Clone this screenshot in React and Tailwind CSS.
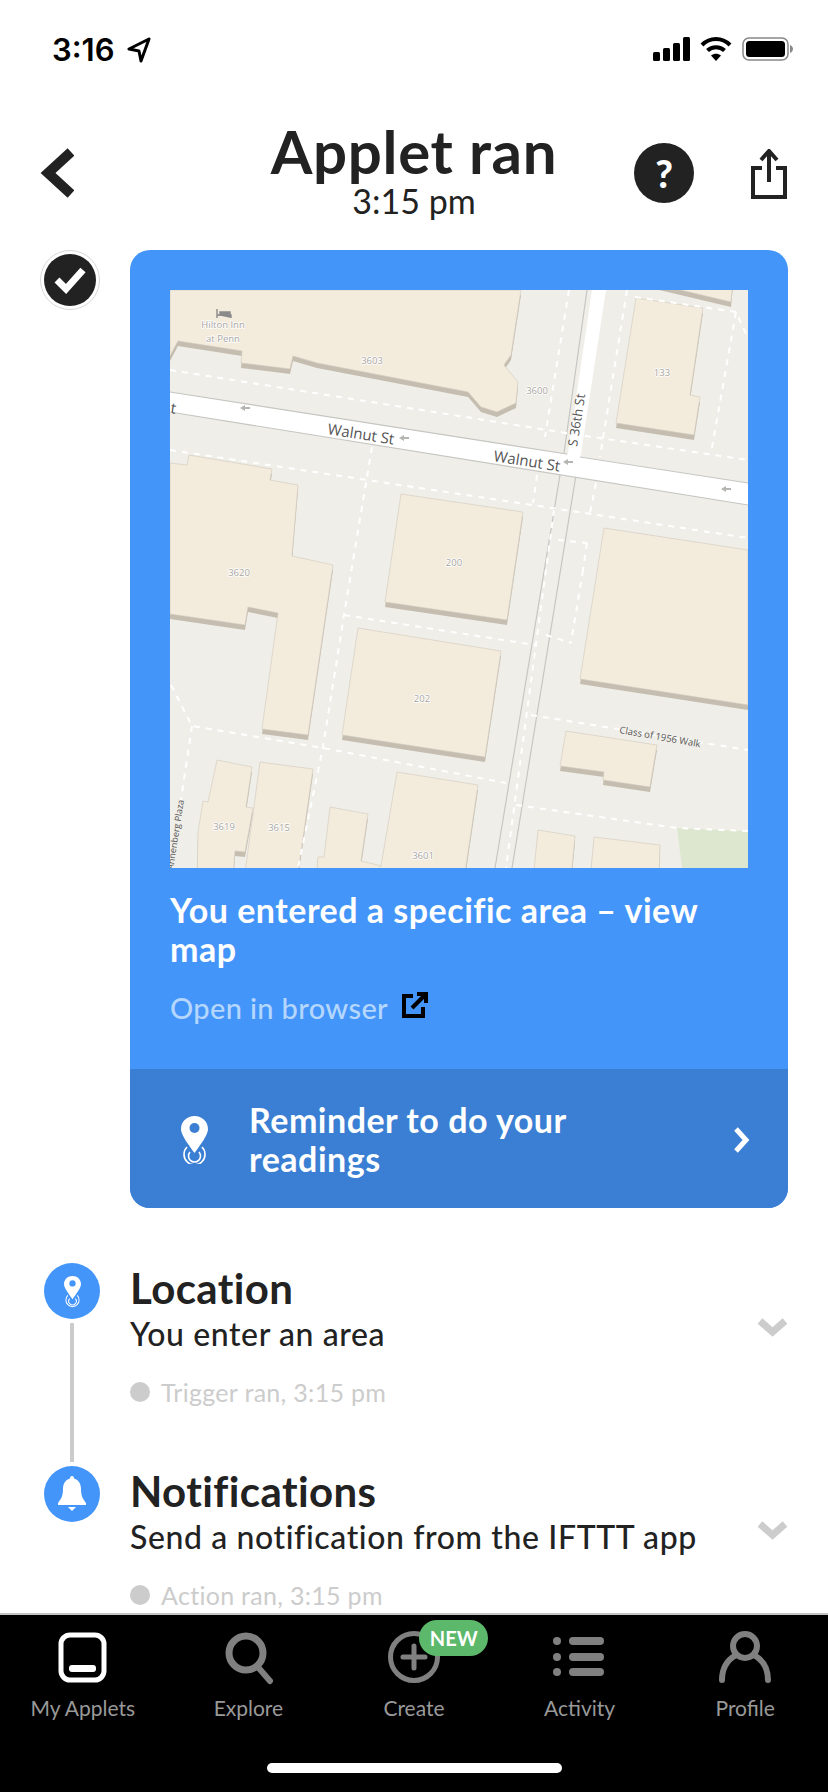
import React from "react";

const buildings = [
  "0,0 351,0 341,65 334,75 348,92 346,113 327,122 311,117 298,102 147,73 123,66 120,79 71,73 72,61 8,51 0,66",
  "466,8 533,18 520,105 530,107 524,145 446,133",
  "468,-10 563,-10 561,12",
  "0,173 17,175 19,165 102,179 100,190 128,195 122,266 163,275 138,445 92,439 108,323 78,317 75,335 0,324",
  "231,204 353,222 337,330 215,312",
  "434,238 578,260 578,415 410,389",
  "188,338 331,361 315,467 172,445",
  "396,441 487,455 480,497 433,490 434,482 390,476",
  "47,470 82,477 76,517 83,518 75,562 65,561 63,590 27,590 28,542 33,511 38,512",
  "90,472 143,479 127,590 74,590",
  "160,517 198,524 191,571 212,576 212,590 146,590 148,567 154,567",
  "227,482 308,495 294,590 200,590 211,576",
  "368,540 405,546 401,590 363,590",
  "424,547 490,555 489,590 420,590",
];

const dashes = [
  "0,80 396,143 578,170",
  "399,0 375,147",
  "457,0 430,167",
  "465,7 566,22 578,48",
  "566,22 541,163",
  "0,160 197,190 382,218 578,248",
  "202,157 174,325 153,457 128,578",
  "367,185 363,213",
  "426,193 420,223",
  "384,220 336,578",
  "413,280 401,353",
  "417,253 413,280",
  "388,250 417,253",
  "174,325 365,355",
  "376,345 401,353",
  "1,395 22,436 153,458 336,493",
  "22,436 8,530",
  "361,425 578,460",
  "346,515 507,538 578,541",
];

const labels = [
  ["Hilton Inn", 53, 38],
  ["at Penn", 53, 52],
  ["3603", 202, 74],
  ["3600", 367, 104],
  ["133", 492, 86],
  ["200", 284, 276],
  ["3620", 69, 286],
  ["202", 252, 412],
  ["3619", 54, 540],
  ["3615", 109, 541],
  ["3601", 253, 569],
];

const MapView = () => (
  <svg viewBox="0 0 578 578" className="w-[578px] h-[578px] block">
    <rect width="578" height="578" fill="#f0eee8" />
    <polygon points="507,538 578,541 578,578 512,578" fill="#dde7cf" />
    {/* Schatten */}
    {buildings.map((b) => (
      <polygon key={b} points={b} fill="#c4bdb0" transform="translate(0 5)" />
    ))}
    {buildings.map((b) => (
      <polygon key={b} points={b} fill="#f3ebdc" stroke="#d0cabd" strokeWidth="0.6" />
    ))}
    <path d="M417,0 L394,163 M390,185 L325,578 M406,185 L342,578" stroke="#c6c6c2" strokeWidth="1.2" fill="none" />
    <polygon points="422,0 436,0 410,170 397,170" fill="#fff" />
    <polygon points="0,102 578,193 578,215 0,122" fill="#fff" />
    <path d="M0,102 L397,164 M410,167 L578,193 M0,122 L578,215" stroke="#c6c6c2" strokeWidth="1.2" fill="none" />
    {dashes.map((d) => (
      <polyline key={d} points={d} fill="none" stroke="#fff" strokeWidth="2" strokeDasharray="6 6" />
    ))}
    <g fontFamily="'Open Sans', sans-serif" fill="#555">
      <text transform="translate(157 144) rotate(9)" fontSize="15">Walnut St</text>
      <text transform="translate(323 171) rotate(9)" fontSize="15">Walnut St</text>
      <text transform="translate(0 123) rotate(9)" fontSize="15">t</text>
      <text transform="translate(407 157) rotate(-81)" fontSize="13">S 36th St</text>
      <text transform="translate(449 443) rotate(10)" fontSize="9.5">Class of 1956 Walk</text>
      <text transform="translate(3 580) rotate(-81)" fontSize="9">Annenberg Plaza</text>
    </g>
    <g
      fontFamily="'Open Sans', sans-serif"
      fill="#a8a5a0"
      stroke="#ffffff"
      strokeWidth="1.5"
      textAnchor="middle"
      style={{ paintOrder: "stroke" }}
    >
      {labels.map(([t, x, y]) => (
        <text key={t} x={x} y={y} fontSize="9.5">{t}</text>
      ))}
    </g>
    <path d="M47,19 V28 M47,25 H61 V28 M50,22 H60 V25 H50 Z" stroke="#8a8a8a" strokeWidth="1.4" fill="#8a8a8a" />
    <g fill="#b5b5b2">
      <path d="M70,122 l5,-3 v2 h5 v2 h-5 v2 Z" transform="translate(0 -4)" />
      <path d="M229,152 l5,-3 v2 h5 v2 h-5 v2 Z" transform="translate(0 -4)" />
      <path d="M393,176 l5,-3 v2 h5 v2 h-5 v2 Z" transform="translate(0 -4)" />
      <path d="M551,203 l5,-3 v2 h5 v2 h-5 v2 Z" transform="translate(0 -4)" />
    </g>
  </svg>
);

const Pin = ({ className, fill = "#fff", hole = "#3a7fd3" }) => (
  <svg viewBox="0 0 27 48" className={className}>
    <path d="M13.5,0 C6,0 0,5.5 0,13 C0,19 7,28 13.5,37 C20,28 27,19 27,13 C27,5.5 21,0 13.5,0 Z" fill={fill} />
    <circle cx="13.5" cy="12" r="5" fill={hole} />
    <path d="M6,31 A10.5,10.5 0 1 0 21,31" fill="none" stroke={fill} strokeWidth="1.6" />
    <path d="M9,36 A6,6 0 1 0 18,36" fill="none" stroke={fill} strokeWidth="1.6" />
  </svg>
);

const Chevron = ({ className }) => (
  <svg viewBox="0 0 31 20" className={className}>
    <path d="M3,3 L15.5,14 L28,3" fill="none" stroke="#cccccc" strokeWidth="7" strokeLinejoin="miter" />
  </svg>
);

const TimelineItem = ({ icon, title, text, status, last }) => (
  <div className="flex">
    <div className="w-[56px] ml-[44px] flex flex-col items-center shrink-0">
      <div className="w-[56px] h-[56px] rounded-full bg-[#4495f9] flex items-center justify-center">
        {icon}
      </div>
      {!last && <div className="w-[4px] h-[139px] bg-[#cccccc] mt-[4px] mb-[4px]" />}
    </div>
    <div className="ml-[30px] w-[658px] relative">
      <div className="text-[42px] leading-[48px] font-bold tracking-[0.4px] text-[#222] mt-[1px]">{title}</div>
      <div className="text-[32px] leading-[36px] font-medium tracking-[0.6px] text-[#222] mt-[4px]">{text}</div>
      <div className="flex items-center mt-[25px] text-[#cccccc] text-[25px] tracking-[0.3px] leading-[30px]">
        <span className="w-[20px] h-[20px] rounded-full bg-[#cccccc] mr-[11px]" />
        {status}
      </div>
      <Chevron className="absolute right-0 top-[55px] w-[31px] h-[20px]" />
    </div>
  </div>
);

const tabs = [
  {
    name: "My Applets",
    icon: (
      <svg viewBox="0 0 60 60" className="w-[60px] h-[60px]">
        <rect x="8" y="6" width="43" height="45" rx="9" fill="none" stroke="#fff" strokeWidth="5" />
        <rect x="16" y="36" width="27" height="7" rx="3" fill="#fff" />
      </svg>
    ),
  },
  {
    name: "Explore",
    icon: (
      <svg viewBox="0 0 60 60" className="w-[60px] h-[60px]">
        <circle cx="28" cy="24" r="17" fill="none" stroke="#808080" strokeWidth="7" />
        <path d="M39,37 L52,52" stroke="#808080" strokeWidth="6" strokeLinecap="round" />
      </svg>
    ),
  },
  {
    name: "Create",
    icon: (
      <svg viewBox="0 0 60 60" className="w-[60px] h-[60px]">
        <circle cx="30" cy="28" r="23.5" fill="none" stroke="#808080" strokeWidth="5" />
        <path d="M30,17 V39 M19,28 H41" stroke="#808080" strokeWidth="5" strokeLinecap="round" />
      </svg>
    ),
    badge: true,
  },
  {
    name: "Activity",
    icon: (
      <svg viewBox="0 0 60 60" className="w-[60px] h-[60px]" fill="#808080">
        <circle cx="7" cy="12" r="4" />
        <circle cx="7" cy="28" r="4" />
        <circle cx="7" cy="43" r="4" />
        <rect x="19" y="8" width="35" height="8" rx="4" />
        <rect x="19" y="24" width="35" height="8" rx="4" />
        <rect x="19" y="39" width="35" height="8" rx="4" />
      </svg>
    ),
  },
  {
    name: "Profile",
    icon: (
      <svg viewBox="0 0 60 60" className="w-[60px] h-[60px]" fill="none" stroke="#808080" strokeWidth="6">
        <circle cx="30" cy="17" r="12" />
        <path d="M7,51 C7,38 14,30 21,26 M53,51 C53,38 46,30 39,26" strokeLinecap="round" />
      </svg>
    ),
  },
];

const App = () => {
  return (
    <div
      className="w-[828px] h-[1792px] bg-white flex flex-col overflow-hidden"
      style={{ fontFamily: "Lato, 'Noto Sans', sans-serif" }}
    >
      {/* Status bar */}
      <div className="h-[100px] shrink-0 flex justify-between items-start pt-[32px] pl-[52px] pr-[35px]">
        <div className="flex items-center">
          <span className="text-[31px] leading-[36px] font-semibold text-black" style={{ fontFamily: "Inter, sans-serif" }}>3:16</span>
          <svg viewBox="0 0 24 26" className="w-[24px] h-[26px] ml-[12px]">
            <path d="M22,2 L2,12 L12,14 L14,24 Z" fill="none" stroke="#000" strokeWidth="3" strokeLinejoin="round" />
          </svg>
        </div>
        <div className="flex items-center gap-[10px] pt-[5px]">
          <svg viewBox="0 0 37 24" className="w-[37px] h-[24px]" fill="#000">
            <rect x="0" y="15" width="7" height="9" rx="1.5" />
            <rect x="10" y="11" width="7" height="13" rx="1.5" />
            <rect x="20" y="6" width="7" height="18" rx="1.5" />
            <rect x="30" y="0" width="7" height="24" rx="1.5" />
          </svg>
          <svg viewBox="0 0 32 24" className="w-[32px] h-[24px]" fill="none" stroke="#000" strokeWidth="4">
            <path d="M2,8 C10,0 22,0 30,8" />
            <path d="M7.5,13.5 C12,9 20,9 24.5,13.5" />
            <path d="M16,24 L11,18.5 C14,16 18,16 21,18.5 Z" fill="#000" stroke="none" />
          </svg>
          <svg viewBox="0 0 51 24" className="w-[51px] h-[24px]">
            <rect x="1" y="1" width="45" height="22" rx="6" fill="none" stroke="#888" strokeWidth="1.5" />
            <rect x="4" y="4" width="39" height="16" rx="3.5" fill="#000" />
            <path d="M48,8 C50,9 51,10.5 51,12 C51,13.5 50,15 48,16 Z" fill="#888" />
          </svg>
        </div>
      </div>

      {/* Header */}
      <div className="h-[150px] shrink-0 relative flex flex-col items-center">
        <div className="text-[60px] leading-[56px] font-bold tracking-[0.7px] text-[#222] mt-[23px]">Applet ran</div>
        <div className="text-[34px] leading-[34px] text-[#222] mt-[5px]">3:15 pm</div>
        <svg viewBox="0 0 34 50" className="absolute left-[40px] top-[48px] w-[34px] h-[50px]">
          <path d="M31,4 L8,25 L31,46" fill="none" stroke="#222" strokeWidth="10" />
        </svg>
        <div className="absolute left-[634px] top-[43px] w-[60px] h-[60px] rounded-full bg-[#222] flex items-center justify-center text-white text-[38px] font-black">?</div>
        <svg viewBox="0 0 36 50" className="absolute left-[751px] top-[49px] w-[36px] h-[50px]" fill="none" stroke="#222" strokeWidth="4">
          <path d="M11,19 H2 V48 H34 V19 H25" />
          <path d="M18,33 V4" />
          <path d="M10,11 L18,2 L26,11" />
        </svg>
      </div>

      {/* Card */}
      <div className="flex shrink-0">
        <div className="ml-[40px] w-[60px] h-[60px] rounded-full bg-white border border-[#d8d8d8] flex items-center justify-center">
          <div className="w-[52px] h-[52px] rounded-full bg-[#222] flex items-center justify-center">
            <svg viewBox="0 0 34 30" className="w-[34px] h-[30px]">
              <path d="M4,15 L13,24 L30,5" fill="none" stroke="#fff" strokeWidth="7" />
            </svg>
          </div>
        </div>
        <div className="ml-[30px] w-[658px] h-[958px] rounded-[20px] overflow-hidden bg-[#4495f9] flex flex-col">
          <div className="px-[40px] pt-[40px] flex-1">
            <MapView />
            <div className="text-[34px] leading-[39px] font-bold tracking-[0.5px] text-white mt-[22px]">
              You entered a specific area – view map
            </div>
            <div className="flex items-center mt-[22px]">
              <span className="text-[29px] leading-[36px] tracking-[0.35px] text-[#b5d7fd] font-medium">Open in browser</span>
              <svg viewBox="0 0 26 26" className="w-[26px] h-[26px] ml-[14px] -mt-[6px]" fill="none" stroke="#000" strokeWidth="4">
                <path d="M11,4 H2 V24 H21 V15" />
                <path d="M10,16 L22,4" />
                <path d="M15,2 H24 V11" />
              </svg>
            </div>
          </div>
          <div className="h-[139px] bg-[#3a7fd3] flex items-center shrink-0 relative">
            <Pin className="w-[27px] h-[48px] ml-[51px] mt-[2px]" />
            <div className="text-[34px] leading-[39px] font-bold tracking-[0.5px] text-white ml-[41px] w-[400px]">
              Reminder to do your readings
            </div>
            <svg viewBox="0 0 18 28" className="absolute left-[603px] top-[57px] w-[18px] h-[28px]">
              <path d="M3,3 L13,14 L3,25" fill="none" stroke="#fff" strokeWidth="5" />
            </svg>
          </div>
        </div>
      </div>

      {/* Timeline */}
      <div className="flex-1 overflow-hidden pt-[55px]">
        <TimelineItem
          title="Location"
          text="You enter an area"
          status="Trigger ran, 3:15 pm"
          icon={<Pin className="w-[17px] h-[36px]" hole="#4495f9" />}
        />
        <TimelineItem
          last
          title="Notifications"
          text="Send a notification from the IFTTT app"
          status="Action ran, 3:15 pm"
          icon={
            <svg viewBox="0 0 30 36" className="w-[30px] h-[36px]" fill="#fff">
              <path d="M15,0 C13.5,0 13,1 13,2.5 C8,4 6,8 6,13 C6,20 4,23 1,27 V29 H29 V27 C26,23 24,20 24,13 C24,8 22,4 17,2.5 C17,1 16.5,0 15,0 Z" />
              <path d="M11,31 H19 L15,35 Z" />
            </svg>
          }
        />
      </div>

      {/* Tab bar */}
      <div className="h-[179px] shrink-0 bg-black border-t-2 border-[#c4c4c4] relative">
        <div className="grid grid-cols-5 pt-[14px]">
          {tabs.map((tab) => (
            <div key={tab.name} className="flex flex-col items-center relative">
              {tab.icon}
              <span className="text-[21px] leading-[26px] text-[#999] mt-[6px]">{tab.name}</span>
              {tab.badge && (
                <span className="absolute left-[88px] top-[-9px] w-[69px] h-[36px] rounded-[18px] bg-[#5cb86a] text-white text-[20px] leading-[36px] font-bold text-center">
                  NEW
                </span>
              )}
            </div>
          ))}
        </div>
        <div className="absolute left-[267px] top-[148px] w-[295px] h-[10px] rounded-full bg-white" />
      </div>
    </div>
  );
};

export default App;
